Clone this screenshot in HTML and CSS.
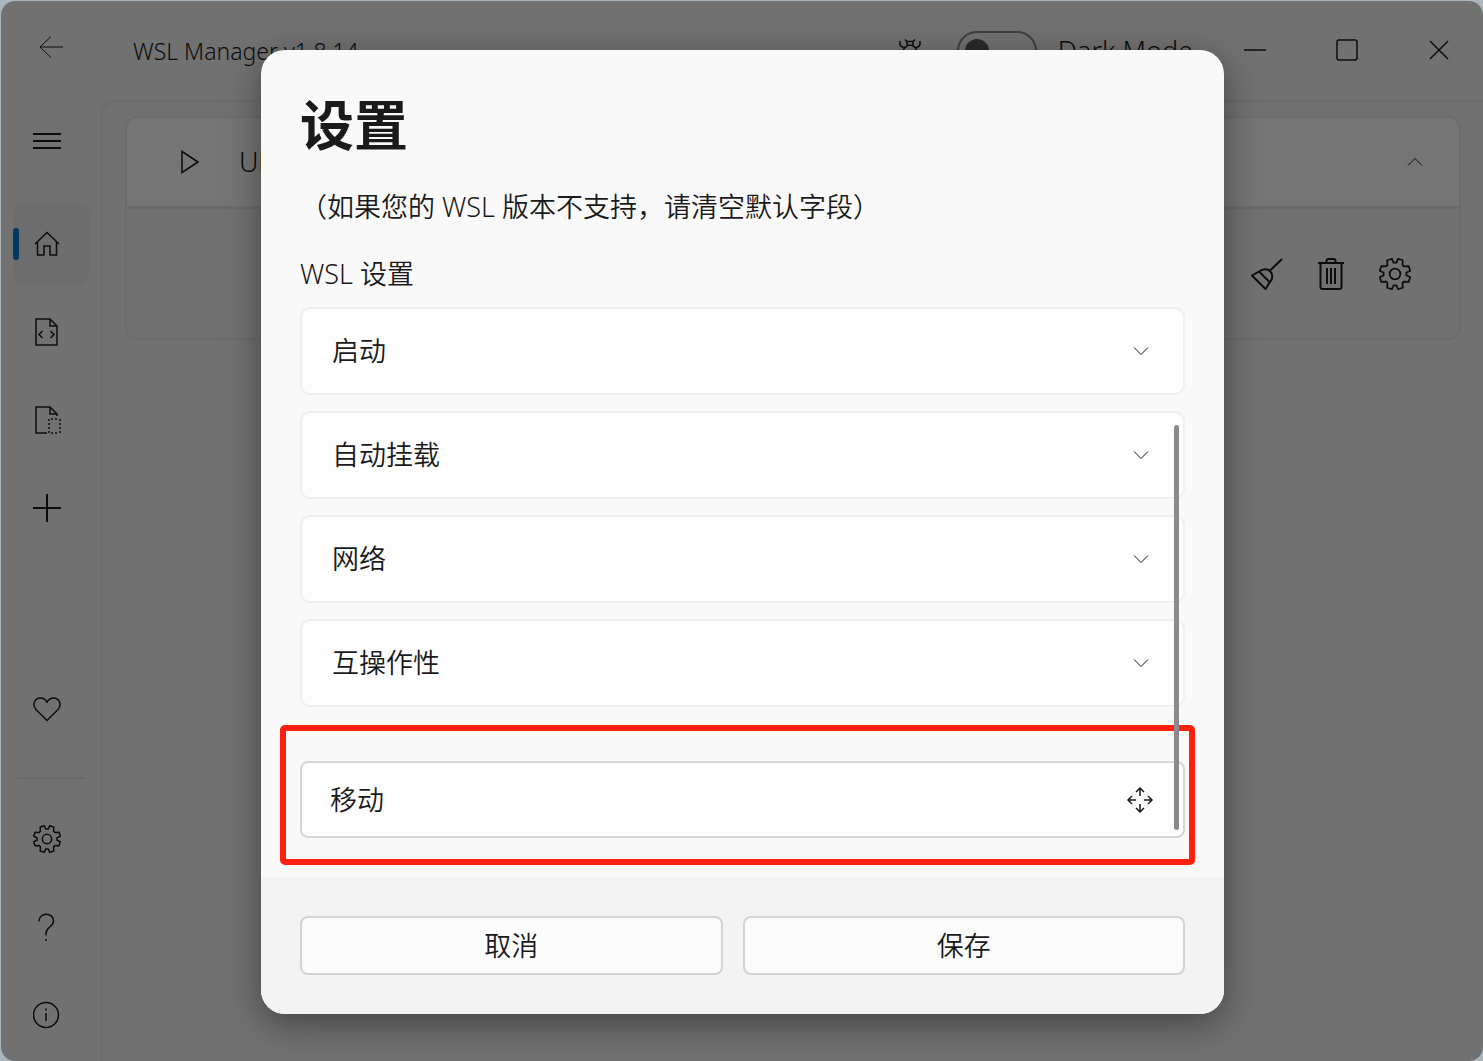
FILE: index.html
```html
<!DOCTYPE html>
<html lang="zh-CN">
<head>
    <meta charset="UTF-8">
    <meta name="viewport" content="width=device-width, initial-scale=1.0">
    <title>WSL Manager</title>
    <link rel="stylesheet" href="styles.css">
</head>
<body>
    <!-- shared icons -->
    <svg class="sprite" aria-hidden="true">
        <symbol id="gear" viewBox="-14 -14 28 28">
            <path d="M1.3-10 2.7-13.3 6.8-12 6.6-7.8 7.8-6.6 12-6.8 13.3-2.7 10-1.3V1.3L13.3 2.7 12 6.8 7.8 6.6 6.6 7.8 6.8 12 2.7 13.3 1.3 10H-1.3L-2.7 13.3-6.8 12-6.6 7.8-7.8 6.6-12 6.8-13.3 2.7-10 1.3V-1.3L-13.3-2.7-12-6.8-7.8-6.6-6.6-7.8-6.8-12-2.7-13.3-1.3-10Z"/>
            <circle r="4.7"/>
        </symbol>
        <symbol id="chevron" viewBox="0 0 16 16">
            <path d="M1 4.5 8 11.5 15 4.5"/>
        </symbol>
    </svg>

    <div class="window">
        <header class="titlebar">
            <button class="back" aria-label="Back">
                <svg class="icon" viewBox="0 0 28 28"><path d="M26 14H3M14 3.500 3 14 14 24.500"/></svg>
            </button>
            <span class="app-title">WSL Manager v1.8.14</span>
            <button class="bug" aria-label="Report a bug">
                <svg class="icon thin" viewBox="0 0 28 28"><path d="M9 2.500 11 4.500h6L19 2.500M11 4.500v4M17 4.500v4M9 10.500q5-5 10 0M4 4v3q0 3 5 3.500M24 4v3q0 3-5 3.500M9 10.500q-3 3-3 7 0 8 8 8t8-8q0-4-3-7M7 13.500 4 16M21 13.500 24 16M7 22l-3 3M21 22l3 3M14 14v11"/></svg>
            </button>
            <label class="dark-mode"><input type="checkbox">Dark Mode</label>
            <div class="window-buttons">
                <button aria-label="Minimize"><svg class="icon thin" viewBox="0 0 28 28"><path d="M3 13h22"/></svg></button>
                <button aria-label="Maximize"><svg class="icon thin" viewBox="0 0 28 28"><rect x="4" y="3" width="20" height="20" rx="2"/></svg></button>
                <button aria-label="Close"><svg class="icon thin" viewBox="0 0 28 28"><path d="M5 4 23 22M23 4 5 22"/></svg></button>
            </div>
        </header>

        <div class="layout">
            <nav class="sidebar">
                <button class="nav-item menu" aria-label="Menu"><svg class="icon" viewBox="0 0 28 28"><path d="M0 7h28M0 14h28M0 21h28"/></svg></button>
                <button class="nav-item active" aria-label="Home"><svg class="icon thin" viewBox="0 0 28 28"><path d="M2 14 14 2.500 26 14M4.500 12v13H11V16h6v9h6.500V12"/></svg></button>
                <button class="nav-item" aria-label="Quick actions"><svg class="icon thin" viewBox="0 0 28 28"><path d="M3 1h14l7 7v19H3ZM17 1v7h7M9.500 13 6 16.500 9.500 20M17.500 13 21 16.500 17.500 20"/></svg></button>
                <button class="nav-item" aria-label="Templates"><svg class="icon thin" viewBox="0 0 28 28"><path d="M14 27H3V1h14l7 7v2M17 1v7h7"/><path stroke-dasharray="2 2" d="M16 27V13M27 13v14M18 13h8M18 27h8"/></svg></button>
                <button class="nav-item" aria-label="Add an instance"><svg class="icon" viewBox="0 0 28 28"><path d="M0 14h28M14 0v28"/></svg></button>

                <button class="nav-item bottom" aria-label="Donate"><svg class="icon thin" viewBox="0 0 28 28"><path d="M14 25.500 3 14.500C-1 10 1.500 3 7.500 3 10.500 3 12.500 4.500 14 7c1.500-2.500 3.500-4 6.500-4C26.500 3 29 10 25 14.500Z"/></svg></button>
                <hr class="divider">
                <button class="nav-item" aria-label="Settings"><svg class="icon thin"><use href="#gear"/></svg></button>
                <button class="nav-item" aria-label="Help"><svg class="icon thin" viewBox="0 0 28 28"><path d="M6 8.500C6-1.500 20.500-1 20.500 8 20.500 14 13 14 13 20v2.500M13 26v2"/></svg></button>
                <button class="nav-item" aria-label="About"><svg class="icon thin" viewBox="0 0 28 28"><circle cx="13" cy="14" r="12.500"/><path d="M13 12v8M13 7.500v2"/></svg></button>
            </nav>

            <main class="content">
                <section class="distro">
                    <div class="distro-header">
                        <button class="play" aria-label="Start"><svg class="icon thin" viewBox="0 0 28 28"><path d="M6 3.500 22 14 6 24.500Z"/></svg></button>
                        <span class="distro-name">Ubuntu</span>
                        <button class="collapse" aria-label="Collapse"><svg class="chevron up"><use href="#chevron"/></svg></button>
                    </div>
                    <div class="distro-actions">
                        <button aria-label="Clean up"><svg class="icon large" viewBox="0 0 32 32"><path d="M31 1 18.500 13M1 17.500 8 13.500C12 10.500 16.500 10.500 19 13c3 3 3 8 0 11L14.500 31ZM8 13.500 18.500 24"/></svg></button>
                        <button aria-label="Delete"><svg class="icon large" viewBox="0 0 32 32"><path d="M3 5h26M11.500 5V3q0-2 2-2h5q2 0 2 2v2M5.500 5v24q0 2 2 2h17q2 0 2-2V5M12 10v16M16 10v16M20 10v16"/></svg></button>
                        <button aria-label="Settings"><svg class="icon large thin"><use href="#gear"/></svg></button>
                    </div>
                </section>
            </main>
        </div>

        <div class="overlay">
            <div class="dialog" role="dialog" aria-modal="true" aria-labelledby="dialog-title">
                <div class="dialog-body">
                    <h1 id="dialog-title">设置</h1>
                    <p class="hint">（如果您的 WSL 版本不支持，请清空默认字段）</p>
                    <h2>WSL 设置</h2>
                    <div class="expanders">
                        <button class="expander">启动<svg class="chevron"><use href="#chevron"/></svg></button>
                        <button class="expander">自动挂载<svg class="chevron"><use href="#chevron"/></svg></button>
                        <button class="expander">网络<svg class="chevron"><use href="#chevron"/></svg></button>
                        <button class="expander">互操作性<svg class="chevron"><use href="#chevron"/></svg></button>
                    </div>
                    <div class="move-row">
                        <button class="move">移动<svg class="move-icon" viewBox="0 0 26 26"><path d="M13 9V1M9 5l4-4 4 4M13 17v8M9 21l4 4 4-4M9 13H1M5 9l-4 4 4 4M17 13h8M21 9l4 4-4 4"/></svg></button>
                    </div>
                    <div class="scroll-thumb"></div>
                </div>
                <footer class="dialog-footer">
                    <button>取消</button>
                    <button>保存</button>
                </footer>
            </div>
        </div>
    </div>
</body>
</html>
```

FILE: styles.css
```css
* { box-sizing: border-box; }
body { margin: 0; background-color: #a9b6be; color: #1a1a1a; font-family: "Noto Sans", "Noto Sans CJK SC", sans-serif; font-size: 27px; font-weight: 350; line-height: 36px; }
button { padding: 0; border: none; background: none; color: inherit; font: inherit; cursor: pointer; }
svg { display: block; fill: none; stroke: currentColor; }
.sprite { position: absolute; width: 0; height: 0; }
.icon { width: 28px; height: 28px; stroke-width: 2; }
.icon.large { width: 32px; height: 32px; }
.icon.thin { stroke-width: 1.5; }
.chevron { width: 16px; height: 16px; stroke-width: 1; }
.chevron.up { transform: rotate(180deg); }

.window { position: relative; display: flex; flex-direction: column; min-height: calc(100vh - 1px); margin: 1px 0 0 1px; border-radius: 14px; overflow: hidden; background-color: #f3f3f3; }

/* title bar */
.titlebar { display: flex; align-items: center; height: 99px; padding-left: 36px; }
.back { margin-bottom: 8px; }
.back .icon { stroke-width: 1; }
.app-title { flex: 1; margin-left: 68px; font-size: 23px; }
.bug { margin-right: 33px; }
.dark-mode { display: flex; align-items: center; gap: 21px; margin-right: 16px; white-space: nowrap; }
.dark-mode input { appearance: none; display: flex; align-items: center; width: 80px; height: 40px; margin: 0; padding-left: 6px; border: 2px solid #888; border-radius: 20px; }
.dark-mode input::before { content: ""; width: 24px; height: 24px; border-radius: 50%; background-color: #5b5b5b; }
.window-buttons { display: flex; margin-right: -2px; }
.window-buttons button { display: flex; justify-content: center; align-items: center; width: 92px; height: 60px; }

/* sidebar */
.layout { flex: 1; display: flex; }
.sidebar { display: flex; flex-direction: column; gap: 8px; width: 100px; padding: 1px 12px 6px; }
.nav-item { position: relative; display: flex; justify-content: center; align-items: center; height: 80px; padding-right: 8px; border-radius: 8px; }
.nav-item.menu { margin-bottom: 15px; }
.nav-item.active { background-color: #eaeaea; }
.nav-item.active::before { content: ""; position: absolute; left: 0; top: 24px; width: 6px; height: 32px; border-radius: 3px; background-color: #0078d4; }
.nav-item.bottom { margin-top: auto; }
.divider { width: 68px; margin: 20px 4px 12px; border: none; border-top: 2px solid #e4e4e4; }

/* distro list */
.content { flex: 1; padding: 14px 22px; border: 2px solid #e8e8e8; border-width: 2px 0 0 2px; border-radius: 16px 0 0; }
.distro { border: 2px solid #e8e8e8; border-radius: 12px; overflow: hidden; }
.distro-header { display: flex; align-items: center; height: 91px; padding: 0 36px 0 49px; border-bottom: 3px solid #e6e6e6; background-color: #fbfbfb; }
.distro-name { flex: 1; margin-left: 35px; }
.distro-actions { display: flex; justify-content: flex-end; gap: 32px; padding: 49px 48px 48px; }

/* settings dialog */
.overlay { position: absolute; inset: 0; display: flex; justify-content: center; align-items: center; padding: 22px 20px 20px 21px; background-color: rgba(0, 0, 0, 0.535); }
.dialog { width: 100%; max-width: 963px; border-radius: 24px; background-color: #f9f9f9; box-shadow: 0 10px 36px rgba(0, 0, 0, 0.4); overflow: hidden; }
.dialog-body { position: relative; padding: 39px; }
h1 { margin: 0 0 28px; font-size: 54px; line-height: 72px; font-weight: bold; }
.hint { margin: 0 0 31px; }
h2 { margin: 0 0 15px; font-size: 27px; font-weight: inherit; }
.expanders { display: grid; gap: 16px; }
.expander, .move { display: flex; justify-content: space-between; align-items: center; width: 100%; border: 2px solid #efefef; border-radius: 10px; background-color: #fdfdfd; }
.expander { height: 88px; padding: 0 34px 0 30px; }
.move { height: 77px; padding: 0 30px 0 28px; border-color: #d6d6d6; border-radius: 8px; }
.move-icon { width: 26px; height: 26px; stroke-width: 1.5; }
.scroll-thumb { position: absolute; top: 375px; bottom: 47px; right: 45px; width: 5px; border-radius: 3px; background-color: #8a8a8a; }
.move-row { position: relative; margin-top: 54px; }
/* red frame around the move button */
.move-row::after { content: ""; position: absolute; inset: -36px -10px -27px -20px; border: 6px solid #ff2010; border-radius: 5px; pointer-events: none; }
.dialog-footer { display: grid; grid-template-columns: 423fr 443fr; gap: 20px; padding: 39px; background-color: #f3f3f3; }
.dialog-footer button { height: 59px; border: 2px solid #d3d3d3; border-radius: 8px; background-color: #fbfbfb; }
```
